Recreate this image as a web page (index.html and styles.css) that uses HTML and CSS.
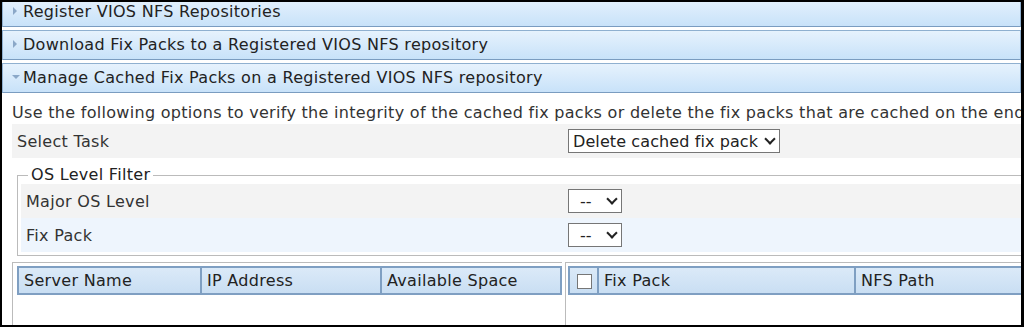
FILE: index.html
```
<!DOCTYPE html>
<html lang="en">
<head>
    <meta charset="UTF-8">
    <title>Manage Cached Fix Packs</title>
    <link rel="stylesheet" href="styles.css">
</head>
<body>

<div class="frame">
    <div class="scroller">
        <div class="bar"><span class="arrow right"></span>Register VIOS NFS Repositories</div>
        <div class="bar"><span class="arrow right"></span>Download Fix Packs to a Registered VIOS NFS repository</div>
        <div class="bar open"><span class="arrow down"></span>Manage Cached Fix Packs on a Registered VIOS NFS repository</div>

        <div class="content">
            <p class="intro">Use the following options to verify the integrity of the cached fix packs or delete the fix packs that are cached on the endpoint servers.</p>

            <div class="row task-row">
                <label>Select Task</label>
                <span class="sel task-select">
                    <select>
                        <option>Delete cached fix pack</option>
                        <option>Verify cached fix pack</option>
                    </select>
                </span>
            </div>

            <fieldset class="filter">
                <legend>OS Level Filter</legend>
                <div class="row filter-row">
                    <label>Major OS Level</label>
                    <span class="sel small-select"><select><option>--</option></select></span>
                </div>
                <div class="row filter-row alt">
                    <label>Fix Pack</label>
                    <span class="sel small-select"><select><option>--</option></select></span>
                </div>
            </fieldset>

            <div class="panels">
                <div class="panel left-panel">
                    <table class="grid">
                        <tr>
                            <th class="c-server">Server Name</th>
                            <th class="c-ip">IP Address</th>
                            <th>Available Space</th>
                        </tr>
                    </table>
                </div>
                <div class="panel right-panel">
                    <table class="grid">
                        <tr>
                            <th class="c-check"><span class="checkbox"></span></th>
                            <th class="c-fix">Fix Pack</th>
                            <th>NFS Path</th>
                        </tr>
                    </table>
                </div>
            </div>
        </div>
    </div>
</div>

</body>
</html>
```

FILE: styles.css
```
html, body { margin: 0; padding: 0; background: #000; }
body { font-family: "DejaVu Sans", Verdana, sans-serif; font-size: 16px; letter-spacing: 0.3px; color: #333; }

.frame { margin: 2px 3px 0 2px; height: 323px; background: #fff; overflow: hidden; }
.scroller { margin-top: -5px; }

.bar { height: 28px; line-height: 28px; border: 1px solid #8fb0d0; border-bottom-color: #7a9cc0; margin-bottom: 3px;
       background: linear-gradient(#e6f2fd, #c8e2f9); color: #222; white-space: nowrap; padding-left: 10px; }
.arrow { display: inline-block; width: 0; height: 0; margin-right: 6px; vertical-align: middle; position: relative; top: -2px; }
.arrow.right { border-top: 4px solid transparent; border-bottom: 4px solid transparent; border-left: 4px solid #8ba8c8; }
.arrow.down { border-left: 4px solid transparent; border-right: 4px solid transparent; border-top: 4px solid #8ba8c8; margin-right: 3px; margin-left: -1px; }

.content { padding-left: 10px; width: 1200px; }
.intro { margin: 5px 0 0 0; padding-top: 4px; white-space: nowrap; line-height: 22px; }

.row { display: flex; align-items: center; height: 34px; }
.row label { flex: none; }
.task-row { background: #f3f3f3; padding-left: 5px; }
.task-row label { width: 551px; }

.filter { margin: 8px 0 0 5px; padding: 0 0 3px 3px; border: 1px solid #bbb; border-right: none; }
.filter legend { padding: 0 3px; margin-left: 7px; color: #222; line-height: 18px; }
.filter-row { background: #f3f3f3; padding-left: 5px; }
.filter-row.alt { background: #eef5fd; }
.filter-row label { width: 542px; }

.sel { display: inline-block; position: relative; height: 24px; }
.sel select { -webkit-appearance: none; appearance: none; width: 100%; height: 24px; box-sizing: border-box;
              font-family: "DejaVu Sans", Verdana, sans-serif; font-size: 16px; letter-spacing: 0.1px; color: #222;
              background: #fff; border: 1px solid #767676; border-radius: 0; padding: 0 0 0 4px; margin: 0; }
.sel::after { content: ""; position: absolute; right: 6px; top: 6px; width: 6px; height: 6px;
              border-right: 2px solid #222; border-bottom: 2px solid #222; transform: rotate(45deg); pointer-events: none; }
.task-select { width: 212px; }
.small-select { width: 54px; }
.small-select select { padding-left: 11px; }

.panels { display: flex; gap: 3px; margin-top: 6px; height: 80px; }
.panel { border: 1px solid #bbb; border-bottom: none; border-right: none; }
.left-panel { width: 550px; padding: 3px 0 0 4px; }
.right-panel { flex: 1; padding: 3px 0 0 2px; }

.grid { border-collapse: collapse; }
.left-panel .grid { width: 545px; }
.right-panel .grid { width: 700px; }
.grid th { height: 25px; font-weight: normal; text-align: left; padding: 0 5px; color: #222;
           background: linear-gradient(#dbeaf8, #c9def3); border: 2px solid #7f9fc2; }
.c-server { width: 171px; }
.c-ip { width: 168px; }
.c-check { width: 16px; padding: 0 4px 0 7px !important; }
.c-fix { width: 245px; }
.checkbox { display: inline-block; width: 13px; height: 13px; border: 1px solid #767676; background: #fff; vertical-align: middle; }
```
